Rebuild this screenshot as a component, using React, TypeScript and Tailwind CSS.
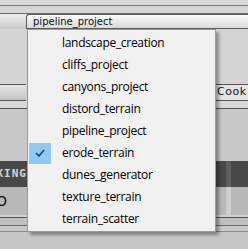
import React from "react";

const items = [
  "landscape_creation",
  "cliffs_project",
  "canyons_project",
  "distord_terrain",
  "pipeline_project",
  "erode_terrain",
  "dunes_generator",
  "texture_terrain",
  "terrain_scatter",
];

export default function App() {
  return (
    <div className="relative w-[248px] h-[249px] overflow-hidden bg-[#c6c6c6]" style={{ fontFamily: '"Open Sans", "Noto Sans", sans-serif' }}>
      {/* background rows */}
      <div className="flex flex-col">
        <div className="h-[5px] bg-[#d8d8d8]" />
        <div className="h-px bg-[#7a7a7a]" />
        <div className="h-[7px] bg-[#d6d6d6]" />
        <div className="h-px bg-[#6a6a6a]" />
        <div className="h-[15px] bg-gradient-to-b from-[#eeeeee] to-[#c9c9c9] flex pl-[26px]">
          <div className="flex-1 h-[15px] rounded-tl-[3px] border border-r-0 border-[#5a5a5a] bg-gradient-to-b from-[#fbfbfb] to-[#dadada] flex items-center pl-[6px] text-[10px] leading-none text-[#111]" style={{ fontFamily: '"DejaVu Sans", sans-serif' }}>
            pipeline_project
          </div>
        </div>
        <div className="h-[55px] bg-[#d4d4d4]" />
        <div className="h-[17px] flex">
          <div className="w-[26px] border-t border-b border-[#555] bg-gradient-to-b from-[#e6e6e6] to-[#c2c2c2]" />
          <div className="flex-1 bg-[#d4d4d4]" />
          <div className="w-[33px] border-t border-l border-b border-[#555] bg-[#e4e4e4] flex items-center pl-[1px] text-[11px] tracking-[0.5px] text-[#111] whitespace-nowrap" style={{ fontFamily: '"DejaVu Sans", sans-serif' }}>
            Cook
          </div>
        </div>
        <div className="h-[7px] bg-[#d8d8d8]" />
        <div className="h-px bg-[#555]" />
        <div className="h-[52px] bg-[#c8c8c8]" />
        <div className="h-[26px] flex bg-[#484848]">
          <div className="w-[27px] overflow-hidden flex items-center justify-end text-[11px] font-bold tracking-[1px] text-[#d4d4d4] whitespace-nowrap" style={{ fontFamily: '"DejaVu Sans Mono", monospace' }}>
            KING
          </div>
          <div className="flex-1" />
          <div className="w-[5px] bg-[#5e5e5e] mr-[17px]" />
        </div>
        <div className="h-[28px] flex bg-[#b8b8b8]">
          <div className="w-[27px] overflow-hidden flex items-center justify-end text-[14px] text-[#111] whitespace-nowrap pr-[20px]" style={{ fontFamily: '"DejaVu Sans", sans-serif' }}>
            O
          </div>
          <div className="flex-1" />
          <div className="w-[5px] bg-[#cfcfcf] mr-[17px]" />
        </div>
        <div className="h-[2px] bg-[#d0d0d0]" />
        <div className="h-px bg-[#555]" />
        <div className="h-[7px] bg-[#c0c0c0]" />
        <div className="h-px bg-[#666]" />
        <div className="h-[5px] bg-[#c8c8c8]" />
        <div className="h-px bg-[#888]" />
        <div className="flex-1 h-[20px] bg-[#c4c4c4]" />
      </div>

      {/* dropdown popup */}
      <div className="absolute left-[27px] top-[29px] w-[189px] h-[203px] bg-[#f1f1f1] border border-[#9a9a9a] shadow-[3px_3px_3px_rgba(0,0,0,0.35)] pt-[2px] flex flex-col">
        {items.map((it) => (
          <div key={it} className="h-[22px] flex items-center">
            <div className="w-[34px] h-[22px] flex items-center pl-[1px]">
              {it === "erode_terrain" && (
                <div className="w-[22px] h-[21px] bg-[#90c8f6] flex items-center justify-center">
                  <svg width="12" height="10" viewBox="0 0 12 10">
                    <path d="M2 5 L5 8 L10 2" fill="none" stroke="#26466f" strokeWidth="1.6" />
                  </svg>
                </div>
              )}
            </div>
            <span className="text-[12px] tracking-[-0.3px] text-black leading-none whitespace-nowrap">{it}</span>
          </div>
        ))}
      </div>
    </div>
  );
}
